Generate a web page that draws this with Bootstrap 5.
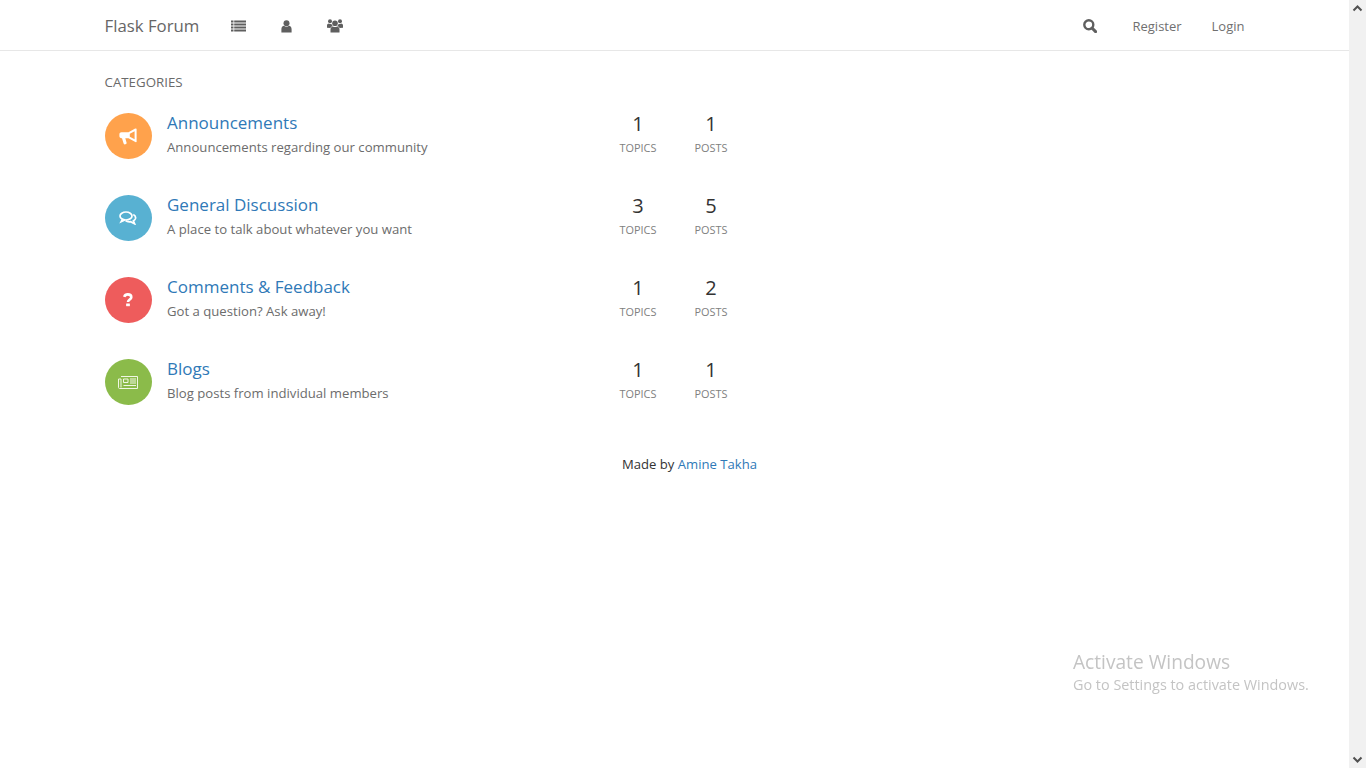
<!DOCTYPE html>
<html lang="en">
<head>
<meta charset="utf-8">
<title>Flask Forum</title>
<link href="https://cdn.jsdelivr.net/npm/bootstrap@5.3.0/dist/css/bootstrap.min.css" rel="stylesheet">
<style>
html,body{height:100%;overflow:hidden}
body{font-family:"Open Sans","Noto Sans",sans-serif;font-size:13px;color:#333;background:#fff}
.page-shell{height:768px}
.page-main{width:1349px;flex:none}
.fake-scroll{width:17px;flex:none;background:#f1f1f1}
.fake-scroll svg{display:block}
.topbar{height:51px;border-bottom:1px solid #e7e7e7;background:#fff}
.wrap{width:1170px;margin:0 auto;padding:0 15px}
.top-inner{height:50px;padding-top:2px}
.brand-name{font-size:16.8px;color:#666;text-decoration:none;width:126px;flex:none}
.top-icon{color:#5f5f5f;display:flex;align-items:center}
.top-link{color:#707070;text-decoration:none;font-size:13px;padding-top:2px}
.cat-head{font-size:13.3px;color:#6a6a6a;line-height:20px;margin-top:21px;margin-bottom:20px;text-transform:uppercase}
.cat-row{height:82px}
.cat-circle{width:47px;height:46px;border-radius:50%;flex:none;margin-right:15.5px;margin-top:1px}
.c-orange{background:#ffa24c}.c-blue{background:#58b1d2}.c-red{background:#ee5c5c}.c-green{background:#8bbb4a}
.cat-text{width:434px;flex:none;margin-top:1px}
.cat-title{font-size:17px;line-height:20px;color:#2f79b7;text-decoration:none;display:block}
.cat-desc{font-size:13.15px;line-height:20px;color:#6c6c6c;margin-top:4px}
.stat-box{width:74px;flex:none;text-align:center}
.stat-box + .stat-box{margin-left:-1px}
.stat-num{font-size:20px;line-height:24px;color:#333}
.stat-lbl{font-size:10.9px;line-height:16px;color:#808080;text-transform:uppercase;margin-top:4px}
.made-by{font-size:13.1px;text-align:center;line-height:20px;margin-top:14px;padding-left:30px}
.made-by a{color:#2f79b7;text-decoration:none}
.win-mark{position:fixed;left:1073px;top:650px;color:#c4c4c4;pointer-events:none}
.win-mark .win-a{font-size:19.15px;line-height:24px}
.win-mark .win-b{font-size:14.4px;line-height:22px}
</style>
</head>
<body>
<div class="page-shell d-flex">
  <div class="page-main">
    <nav class="topbar">
      <div class="wrap top-inner d-flex align-items-center">
        <a class="brand-name" href="#">Flask Forum</a>
        <a class="top-icon" href="#" style="margin-right:35px"><svg width="15" height="12" viewBox="0 0 15 12" fill="currentColor"><rect x="0" y="0.5" width="2.5" height="2"/><rect x="3.2" y="0.5" width="11.8" height="2"/><rect x="0" y="3.5" width="2.5" height="2"/><rect x="3.2" y="3.5" width="11.8" height="2"/><rect x="0" y="6.5" width="2.5" height="2"/><rect x="3.2" y="6.5" width="11.8" height="2"/><rect x="0" y="9.5" width="2.5" height="2"/><rect x="3.2" y="9.5" width="11.8" height="2"/></svg></a>
        <a class="top-icon" href="#" style="margin-right:35px"><svg width="11" height="13" viewBox="0 0 11 13" fill="currentColor"><circle cx="5.5" cy="3.2" r="3"/><path d="M0.4 12.5V9.2C0.4 7.2 1.6 6 3 5.8 4.4 7 6.6 7 8 5.8 9.4 6 10.6 7.2 10.6 9.2V12.5Z"/></svg></a>
        <a class="top-icon" href="#"><svg width="16" height="14" viewBox="0 0 16 14" fill="currentColor"><circle cx="3" cy="2.3" r="2"/><circle cx="13" cy="2.3" r="2"/><circle cx="8" cy="4.2" r="2.8"/><path d="M0 8.8V6.6C0 5.5.8 4.6 2 4.6 2.7 5.2 3.6 5.2 4.4 5 4.8 6 5.3 6.6 5.9 7.1 4.8 7.3 3.9 8 3.4 9Z"/><path d="M16 8.8V6.6C16 5.5 15.2 4.6 14 4.6 13.3 5.2 12.4 5.2 11.6 5 11.2 6 10.7 6.6 10.1 7.1 11.2 7.3 12.1 8 12.6 9Z"/><path d="M3.5 13.5V10.4C3.5 8.8 4.6 7.5 5.9 7.4 7 8.3 9 8.3 10.1 7.4 11.4 7.5 12.5 8.8 12.5 10.4V13.5Z"/></svg></a>
        <a class="top-icon ms-auto" href="#" style="margin-right:35px"><svg width="14" height="14" viewBox="0 0 14 14" fill="none" stroke="currentColor"><circle cx="5.8" cy="5.8" r="4.5" stroke-width="2.4"/><path d="M9 9l3.6 3.6" stroke-width="3" stroke-linecap="round"/></svg></a>
        <a class="top-link" href="#" style="margin-right:30px">Register</a>
        <a class="top-link" href="#">Login</a>
      </div>
    </nav>
    <main class="wrap">
      <div class="cat-head">Categories</div>

      <div class="cat-row d-flex">
        <div class="cat-circle c-orange d-flex align-items-center justify-content-center"><svg width="18" height="17" viewBox="0 0 18 17" fill="#fff"><path d="M16.2 0.4 9.5 4.2H2.5C1.2 4.2.4 5 .4 6.3V8C.4 9.3 1.2 10.2 2.5 10.2H3L4.6 15.6C4.8 16.2 5.3 16.5 5.8 16.4L7 16C7.5 15.8 7.8 15.3 7.6 14.8L6.3 10.2H9.5L16.8 14.2 17.6 14V.8ZM15.6 3.2V11.3L10.8 8.7V5.7Z" fill-rule="evenodd"/></svg></div>
        <div class="cat-text"><a class="cat-title" href="#">Announcements</a><div class="cat-desc">Announcements regarding our community</div></div>
        <div class="stat-box"><div class="stat-num">1</div><div class="stat-lbl">Topics</div></div>
        <div class="stat-box"><div class="stat-num">1</div><div class="stat-lbl">Posts</div></div>
      </div>

      <div class="cat-row d-flex">
        <div class="cat-circle c-blue d-flex align-items-center justify-content-center"><svg width="18" height="14" viewBox="0 0 18 14" fill="none" stroke="#fff" stroke-width="1.7"><ellipse cx="7" cy="5" rx="6" ry="4"/><path d="M3.5 8.2 2.2 10.6 5.8 9"/><path d="M14.3 3.6C16.2 4.6 17 6 16.4 7.7 16 8.7 15 9.5 14.4 9.8L15.6 12.8 11.6 10.7C9.6 11 7.8 10.6 6.6 9.6"/></svg></div>
        <div class="cat-text"><a class="cat-title" href="#">General Discussion</a><div class="cat-desc">A place to talk about whatever you want</div></div>
        <div class="stat-box"><div class="stat-num">3</div><div class="stat-lbl">Topics</div></div>
        <div class="stat-box"><div class="stat-num">5</div><div class="stat-lbl">Posts</div></div>
      </div>

      <div class="cat-row d-flex">
        <div class="cat-circle c-red d-flex align-items-center justify-content-center"><svg width="10" height="14" viewBox="0 0 10 14" fill="none" stroke="#fff" stroke-width="2.6"><path d="M1.2 3.9C1.8 2.2 3 1.4 4.8 1.4 6.9 1.4 8.3 2.5 8.3 4.2 8.3 6.4 5 6.5 5 9"/><rect x="3.7" y="11" width="2.6" height="1.7" fill="#fff" stroke-width="1"/></svg></div>
        <div class="cat-text"><a class="cat-title" href="#">Comments &amp; Feedback</a><div class="cat-desc">Got a question? Ask away!</div></div>
        <div class="stat-box"><div class="stat-num">1</div><div class="stat-lbl">Topics</div></div>
        <div class="stat-box"><div class="stat-num">2</div><div class="stat-lbl">Posts</div></div>
      </div>

      <div class="cat-row d-flex">
        <div class="cat-circle c-green d-flex align-items-center justify-content-center"><svg width="20" height="13" viewBox="0 0 20 13" fill="none" stroke="#f0f7e4" stroke-width="1"><path d="M3 .5H19.5V12.5H1.5C.9 12.5.5 12 .5 11.5V3H3V11.5"/><path d="M5.5 3H10V6.5H5.5Z"/><path d="M12 3H18M12 5H18M12 7H18M5.5 9.5H18"/></svg></div>
        <div class="cat-text"><a class="cat-title" href="#">Blogs</a><div class="cat-desc">Blog posts from individual members</div></div>
        <div class="stat-box"><div class="stat-num">1</div><div class="stat-lbl">Topics</div></div>
        <div class="stat-box"><div class="stat-num">1</div><div class="stat-lbl">Posts</div></div>
      </div>

      <div class="made-by">Made by <a href="#">Amine Takha</a></div>
    </main>
  </div>
  <div class="fake-scroll d-flex flex-column justify-content-between">
    <svg width="17" height="17" viewBox="0 0 17 17" fill="none" stroke="#505050" stroke-width="2"><path d="M4.5 10.5 8.5 6.5 12.5 10.5"/></svg>
    <svg width="17" height="17" viewBox="0 0 17 17" fill="none" stroke="#505050" stroke-width="2"><path d="M4.5 6.5 8.5 10.5 12.5 6.5"/></svg>
  </div>
</div>
<div class="win-mark"><div class="win-a">Activate Windows</div><div class="win-b">Go to Settings to activate Windows.</div></div>
<script src="https://cdn.jsdelivr.net/npm/bootstrap@5.3.0/dist/js/bootstrap.bundle.min.js"></script>
</body>
</html>
